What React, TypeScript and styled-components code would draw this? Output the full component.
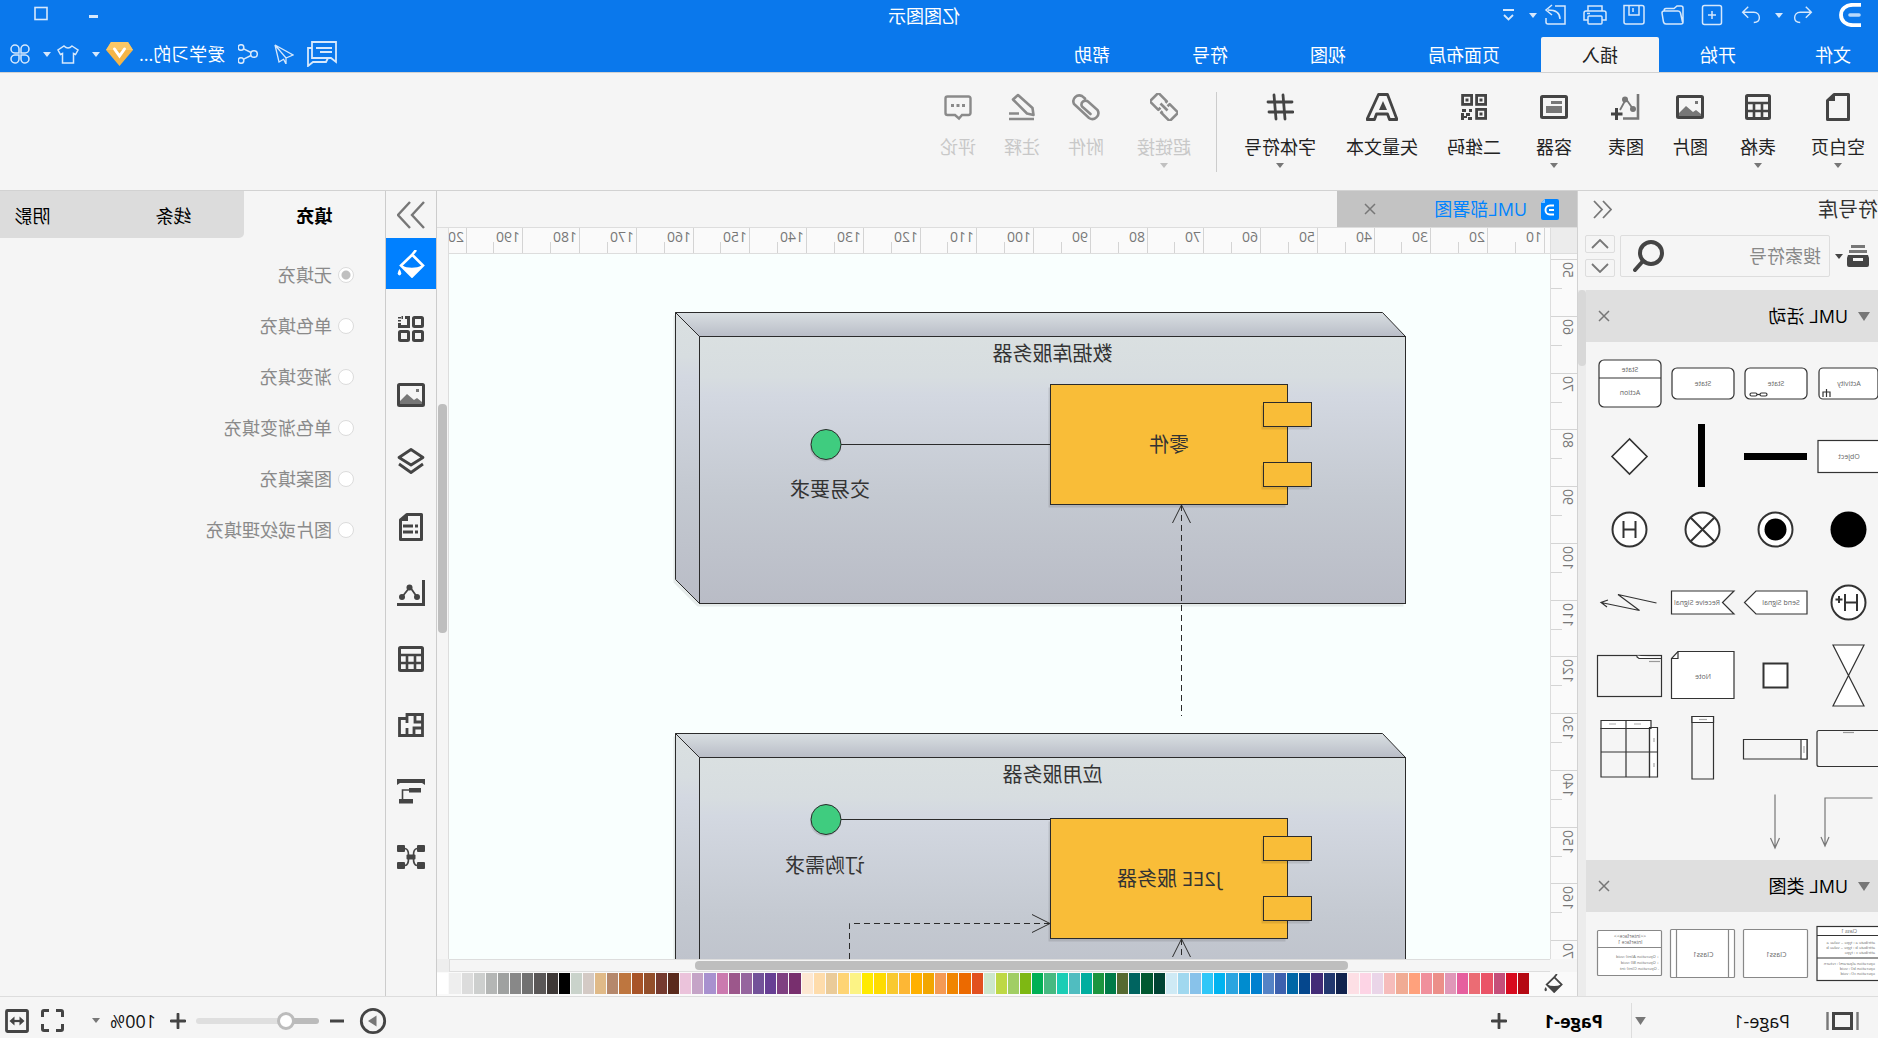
import React from "react";
import styled, { createGlobalStyle } from "styled-components";

const ink = "#444444";
const mid = "#777777";
const line = "#d2d2d2";
const blue = "#0a78ec";

const Global = createGlobalStyle`
  *, *::before, *::after { box-sizing: border-box; }
  html, body { margin: 0; padding: 0; background: #f5f5f5; }
  body, button, input, select {
    font-family: "Open Sans", "Noto Sans CJK SC", sans-serif;
    font-size: 18px;
    line-height: 24px;
  }
  button, input, select { margin: 0; padding: 0; border: 0; background: none; color: inherit; outline: none; }
  svg { display: block; flex: none; }
`;

/* The whole window is shown as a mirror image. */
const Window = styled.div`
  display: flex;
  flex-direction: column;
  height: 100vh;
  overflow: hidden;
  transform: scaleX(-1);
  background: #f5f5f5;
  color: #222;
  white-space: nowrap;
`;

/* ---------- icons ---------- */

type IconProps = { name: keyof typeof icons; w?: number; h?: number; box?: string };

const Icon = ({ name, w = 28, h = 28, box = "0 0 28 28" }: IconProps) => (
  <svg width={w} height={h} viewBox={box} fill="none" stroke="currentColor" strokeWidth={2} aria-hidden="true">
    {icons[name]}
  </svg>
);

const icons = {
  undo: <path d="M9 6 L3 12 L9 18 M3 12 H15 C19 12 21 15 21 18 C21 21 19 23 15 23" strokeWidth="1.5" transform="translate(2 -1)" />,
  redo: <path d="M19 6 L25 12 L19 18 M25 12 H13 C9 12 7 15 7 18 C7 21 9 23 13 23" strokeWidth="1.5" transform="translate(-2 -1)" />,
  add: (
    <g strokeWidth="1.5">
      <rect x="4.500" y="4.500" width="19" height="19" rx="2" />
      <path d="M14 10 V18 M10 14 H18" />
    </g>
  ),
  folder: <path d="M4 9 V7 Q4 5 6 5 H10 L13 7.5 H21 Q23 7.5 23 10 M4 9 V21 Q4 23 6 23 H21 Q23 23 23.500 21 L25 12 Q25 10 23 10 H9 Q7 10 6.500 12 L4.500 21" strokeWidth="1.5" />,
  save: (
    <g strokeWidth="1.5">
      <path d="M6 4.500 H24 V21 Q24 23 22 23 H6 Q4 23 4 21 V6.500 Q4 4.500 6 4.500 Z" />
      <path d="M9 4.500 V14 H19 V4.500 M15 7 V11" />
    </g>
  ),
  print: (
    <g strokeWidth="1.5">
      <path d="M7 10 V5 H21 V10 M7 19 H3 V12 Q3 10 5 10 H23 Q25 10 25 12 V19 H21" />
      <rect x="7" y="15" width="14" height="8" rx="1" />
      <path d="M19 12.500 H22" />
    </g>
  ),
  exportIcon: (
    <g strokeWidth="1.5">
      <path d="M15 5 H5 V23 H22 Q24 23 24 21 V17" />
      <path d="M10 18 C10 12 14 9 22 9 M18 4 L24 9 L18 14" />
    </g>
  ),
  customize: <path d="M9 9 H20 M10 14 L14.500 18.500 L19 14" strokeWidth="1.8" />,
  caret: <path d="M0 0 H8 L4 5 Z" fill="currentColor" stroke="none" />,
  triangle: <path d="M0 0 H12 L6 9 Z" fill="currentColor" stroke="none" />,
  logo: (
    <g>
      <path d="M0 1.800 H8 C15 1.800 20 6 20 12 C20 18 15 22.200 8 22.200 H0" strokeWidth="3.800" />
      <path d="M2 12 H11" stroke="#b8d8fb" strokeWidth="3.600" strokeLinecap="round" />
    </g>
  ),
  docLogo: (
    <g>
      <path d="M2 0 H14 L18 4 V19 Q18 21 16 21 H2 Q0 21 0 19 V2 Q0 0 2 0 Z" fill="#0083ff" stroke="none" />
      <path d="M14 0 L18 4 H14 Z" fill="#8cc6ff" stroke="none" />
      <path d="M5 6.500 H9 C15 6.500 15 15.500 9 15.500 H5 M5 11 H10" stroke="#fff" strokeWidth="1.900" />
    </g>
  ),
  chat: (
    <g strokeWidth="1.800">
      <path d="M1 1 H25 V17 H6 L1 21 Z" />
      <path d="M25 7 H29 V25 L24 21 H11 L9 17 M5 7 H21 M5 11 H17" />
    </g>
  ),
  send: <path d="M19 1 L1 11 L8 14 L19 1 L15 18 L10 15 M8 14 V20 L10.500 15" strokeWidth="1.300" />,
  share: (
    <g strokeWidth="1.500">
      <circle cx="4" cy="10" r="3.300" />
      <circle cx="17" cy="3.500" r="2.800" />
      <circle cx="17" cy="16.500" r="2.800" />
      <path d="M7 8.500 L14.300 4.800 M7 11.500 L14.300 15.200" />
    </g>
  ),
  diamond: (
    <g>
      <path d="M5 0 H22 L27 8 L13.500 24 L0 8 Z" fill="#f4b548" stroke="none" />
      <path d="M5 0 H22 L27 8 H0 Z" fill="#fbc866" stroke="none" />
      <path d="M8.500 7 L13.500 14 L18.500 7" stroke="#fff" strokeWidth="3" strokeLinecap="round" />
    </g>
  ),
  shirt: <path d="M7 1 L1 5 L3.500 9.500 L5.500 8.500 V18 H16.500 V8.500 L18.500 9.500 L21 5 L15 1 Q11 5 7 1 Z" strokeWidth="1.500" />,
  clover: (
    <g strokeWidth="1.500">
      <path d="M9 9 H4.800 A4 4 0 1 1 9 4.800 Z" />
      <path d="M11 9 V4.800 A4 4 0 1 1 15.200 9 Z" />
      <path d="M9 11 V15.200 A4 4 0 1 1 4.800 11 Z" />
      <path d="M11 11 H15.200 A4 4 0 1 1 11 15.200 Z" />
    </g>
  ),
  minimize: <path d="M9 15.500 H18" strokeWidth="3" />,
  maximize: <rect x="8" y="6.500" width="12" height="12" strokeWidth="1.600" />,
  page: (
    <g>
      <path d="M3.500 1.500 H18 L24.500 7.500 V26.500 H3.500 Z" strokeWidth="3" strokeLinejoin="round" />
      <path d="M17 1 V8 H25 Z" fill="currentColor" stroke="none" />
    </g>
  ),
  table: (
    <g>
      <rect x="2.500" y="2.500" width="23" height="23" rx="1" strokeWidth="3" />
      <path d="M2 10 H26 M2 18 H26 M10 10 V25 M18 10 V25" strokeWidth="2.600" />
    </g>
  ),
  image: (
    <g>
      <rect x="1.500" y="3.500" width="25" height="21" rx="1" strokeWidth="3" />
      <path d="M3 23 V21 L8 17 L11 19 L18 13 L25 20 V23 Z" fill={mid} stroke="none" />
      <rect x="6" y="8" width="3" height="3" fill={mid} stroke="none" />
    </g>
  ),
  chart: (
    <g stroke={mid}>
      <path d="M2 1 V25.500 H17" strokeWidth="2.600" />
      <path d="M7 16 L14 6 L20 17" strokeWidth="1.800" />
      <g fill={mid} stroke="none">
        <circle cx="7" cy="16" r="3" />
        <circle cx="15" cy="6.500" r="3" />
      </g>
      <path d="M23.500 15 V27 M17.500 21 H29" stroke={ink} strokeWidth="3" />
    </g>
  ),
  container: (
    <g>
      <rect x="1.500" y="3.500" width="25" height="21" rx="1" strokeWidth="3" />
      <path d="M6 8 H17 V11 H6 Z M6 13 H22 V20 H6 Z" fill={mid} stroke="none" />
    </g>
  ),
  qr: (
    <g>
      <g strokeWidth="2.800">
        <rect x="2.400" y="2.400" width="9" height="9" />
        <rect x="16.400" y="2.400" width="9" height="9" />
        <rect x="2.400" y="16.400" width="9" height="9" />
      </g>
      <path d="M5.500 5.500h3v3h-3z M19.500 5.500h3v3h-3z M5.500 19.500h3v3h-3z M16 16h3v3h-3z M22 16h4v3h-4z M18 20h4v3h-4z M16 24h4v3h-4z M24 20h3v7h-3z M21 23h3v2h-3z" fill="currentColor" stroke="none" />
    </g>
  ),
  vector: (
    <g>
      <path d="M9.500 1.500 H18.500 L30 26.500 H22.500 L20.500 21 H9.500 L7.500 26.500 H0 Z" transform="translate(-1 0)" strokeWidth="2.800" strokeLinejoin="round" />
      <path d="M13 8 L17 17 H9 Z" fill="currentColor" stroke="none" />
    </g>
  ),
  hash: <path d="M2 9 H26 M1 19 H25 M11 2 L9 26 M20 2 L18 26" strokeWidth="2.800" strokeLinecap="round" />,
  link: (
    <g transform="rotate(-45 14 14)" strokeWidth="2.600" strokeLinejoin="round">
      <path d="M12 18 V20 H0 V8 H12 V11" />
      <path d="M16 10 V8 H28 V20 H16 V17" />
      <path d="M9 14 H19" />
    </g>
  ),
  clip: (
    <path
      d="M15 5.500 L18 3 A6 6 0 0 1 26 11 L11 25 A6 6 0 0 1 2.500 17 L12 8.500 A4 4 0 0 1 18 13.500 L9.500 21"
      strokeWidth="2.600"
      strokeLinecap="round"
      transform="translate(0 0)"
    />
  ),
  note: (
    <g strokeWidth="2.600">
      <path d="M2.500 22 L3.500 15 L18 2 L23 6.500 L9 20.500 Z" strokeLinejoin="round" />
      <path d="M2 26 H27 M17 20.500 H27" />
    </g>
  ),
  comment: (
    <g>
      <path d="M3.500 3.500 H24.500 Q26.500 3.500 26.500 5.500 V20 Q26.500 22 24.500 22 H17 L13 25.500 L10 22 H3.500 Q1.500 22 1.500 20 V5.500 Q1.500 3.500 3.500 3.500 Z" strokeWidth="2.400" />
      <path d="M7 11h3v3H7z M12.500 11h3v3h-3z M18 11h3v3h-3z" fill="currentColor" stroke="none" />
    </g>
  ),
  collapseLeft: <path d="M9 1 L1 9.500 L9 18 M18 1 L10 9.500 L18 18" strokeWidth="1.800" />,
  collapseRight: <path d="M1 1 L13 14 L1 27 M15 1 L27 14 L15 27" strokeWidth="2.400" />,
  tray: (
    <g fill="currentColor" stroke="none">
      <path d="M4 0h14v3H4z M2 5h18v3H2z" fill={mid} />
      <path d="M1 10 H21 L22 13 V20 Q22 22 20 22 H2 Q0 22 0 20 V13 Z M6 13 V16 H16 V13 Z" fillRule="evenodd" />
    </g>
  ),
  search: (
    <g strokeWidth="4">
      <circle cx="13" cy="13" r="11" />
      <path d="M21 21 L29 30" strokeLinecap="round" />
    </g>
  ),
  up: <path d="M1 9 L9 1 L17 9" strokeWidth="1.800" />,
  down: <path d="M1 1 L9 9 L17 1" strokeWidth="1.800" />,
  close: <path d="M1 1 L11 11 M11 1 L1 11" strokeWidth="1.500" />,
  bucket: (
    <g>
      <path d="M13 4 L25 15.500 L14 26.500 L3 15.500 L14 4.500 M10 0 L14 5" strokeWidth="2.600" transform="translate(-1 0)" />
      <path d="M2.500 15.500 Q13 20 24 15.500 L13 27 Z" fill="currentColor" stroke="none" />
      <path d="M25.500 19 Q29 24 25.500 25.500 Q22 24 25.500 19 Z" fill="currentColor" stroke="none" />
    </g>
  ),
  apps: (
    <g strokeWidth="3">
      <rect x="2.500" y="2.500" width="9" height="9" rx="1" />
      <rect x="2.500" y="16.500" width="9" height="9" rx="1" />
      <rect x="16.500" y="16.500" width="9" height="9" rx="1" />
      <path d="M20 2.500 H16.500 V11.500 H25.500 V8 M22 2.500 H23.500 M25.500 2 V3.500 M25.500 5 V6.500" />
    </g>
  ),
  layers: (
    <g strokeWidth="2.800" strokeLinejoin="round">
      <path d="M14 2.500 L26 10.500 L14 18 L2 10.500 Z" />
      <path d="M2 17 L14 25.500 L26 17" />
    </g>
  ),
  doc: (
    <g>
      <path d="M3.500 1.500 H18 L24.500 7 V26.500 H3.500 Z" strokeWidth="3" strokeLinejoin="round" />
      <path d="M17 1 V8 H25 Z" fill="currentColor" stroke="none" />
      <path d="M7 13 H10 M12 13 H22 M7 19 H10 M12 19 H22" strokeWidth="2.800" />
    </g>
  ),
  graph: (
    <g>
      <path d="M1.500 1 V25.500 H28" strokeWidth="3" />
      <path d="M8 18 L15 8 L23 18" strokeWidth="1.800" />
      <g fill="currentColor" stroke="none">
        <circle cx="8" cy="18" r="3" />
        <circle cx="15.500" cy="8.500" r="3" />
        <circle cx="23" cy="18" r="3" />
      </g>
    </g>
  ),
  plan: <path d="M2.500 3.500 H18 V7.500 H25.500 V24.500 H2.500 Z M18 7 V12 M18 17 V24 M10 4 V11 H3 M3 17 H11 V24" strokeWidth="2.800" />,
  gantt: (
    <g fill="currentColor" stroke="none">
      <path d="M0 2 H28 V8 L25 6 H3 L0 8 Z M4 11h12v4.500H4z M12 22h14v4.500H12z" />
      <path d="M16 13 H22.500 V22" fill="none" stroke="currentColor" strokeWidth="1.600" />
    </g>
  ),
  mind: (
    <g>
      <g fill="currentColor" stroke="none">
        <rect x="0" y="2" width="8" height="7" rx="1" />
        <rect x="20" y="2" width="8" height="7" rx="1" />
        <rect x="0" y="19" width="8" height="7" rx="1" />
        <rect x="20" y="19" width="8" height="7" rx="1" />
        <rect x="9.500" y="11.500" width="9" height="5" rx="1" />
      </g>
      <path d="M8 5.500 Q11.500 6 11.500 12 V16 Q11.500 22 8 22.500 M20 5.500 Q16.500 6 16.500 12 V16 Q16.500 22 20 22.500" strokeWidth="1.700" />
    </g>
  ),
  frame: (
    <g>
      <path d="M1.500 0 V18 M31.500 0 V18" stroke={mid} strokeWidth="2.400" />
      <rect x="7.500" y="1.500" width="18" height="15" strokeWidth="3" />
    </g>
  ),
  plus: <path d="M8 1 V15 M1 8 H15" strokeWidth="2.800" strokeLinecap="round" />,
  minus: <path d="M1 8 H15" strokeWidth="3" />,
  play: (
    <g>
      <circle cx="14" cy="14" r="11.700" strokeWidth="2.800" />
      <path d="M10.500 8.500 L19 14 L10.500 19.500 Z" fill={mid} stroke="none" />
    </g>
  ),
  fullscreen: <path d="M1.500 8 V3 Q1.500 1.500 3 1.500 H8 M15 1.500 H20 Q21.500 1.500 21.500 3 V8 M21.500 15 V20 Q21.500 21.500 20 21.500 H15 M8 21.500 H3 Q1.500 21.500 1.500 20 V15" strokeWidth="3" />,
  fit: (
    <g>
      <rect x="1.500" y="1.500" width="21" height="21" rx="1" strokeWidth="2.800" />
      <path d="M6 12 H18" strokeWidth="2.200" />
      <path d="M4.500 12 L9.500 7.500 V16.500 Z M19.500 12 L14.500 7.500 V16.500 Z" fill="currentColor" stroke="none" />
    </g>
  ),
};

const Caret = () => <Icon name="caret" w={8} h={5} box="0 0 8 5" />;

/* ---------- header ---------- */

const Header = styled.header`
  flex: none;
  display: flex;
  flex-direction: column;
  justify-content: space-between;
  height: 73px;
  border-bottom: 1px solid ${line};
  background: ${blue};
  color: #fff;
`;

const TitleBar = styled.div`
  display: grid;
  grid-template-columns: 1fr auto 1fr;
  align-items: center;
  height: 30px;
`;

const QuickBar = styled.div`
  display: flex;
  align-items: center;
  padding-left: 17px;
  gap: 20px;
  color: #d6e8fc;
`;

const QuickGroup = styled.div`
  display: flex;
  align-items: center;
`;

const LogoMark = styled.span`
  color: #fff;
`;

const QuickButton = styled.button<{ $w?: number }>`
  display: flex;
  align-items: center;
  justify-content: center;
  width: ${(p) => p.$w ?? 39}px;
  height: 28px;
`;

const Title = styled.div`
  padding: 2px 0 0 30px;
`;

const WindowButtons = styled.div`
  display: flex;
  justify-content: flex-end;
  padding-right: 15px;
  color: #d6e8fc;
`;

const MenuBar = styled.div`
  display: flex;
  align-items: flex-end;
  justify-content: space-between;
  padding-right: 10px;
`;

const MenuTabs = styled.nav`
  display: flex;
`;

const MenuTab = styled.button<{ $active?: boolean }>`
  height: 35px;
  padding: 0 41px;
  border-radius: 2px 2px 0 0;
  background: ${(p) => (p.$active ? "#f5f5f5" : "transparent")};
  color: ${(p) => (p.$active ? "#222" : "#fff")};
  &:first-child {
    padding-left: 27px;
    padding-right: 38px;
  }
`;

const Account = styled.div`
  display: flex;
  align-items: center;
  gap: 13px;
  height: 36px;
  color: #d6e8fc;
`;

const AccountButton = styled.button`
  display: flex;
  align-items: center;
  gap: 6px;
`;

const ShareButton = styled(AccountButton)`
  padding-left: 3px;
`;

const UserName = styled.span`
  color: #fff;
`;

/* ---------- ribbon ---------- */

const Ribbon = styled.div`
  flex: none;
  display: flex;
  height: 118px;
  border-bottom: 1px solid ${line};
`;

const Tool = styled.button<{ $w: number }>`
  display: flex;
  flex-direction: column;
  align-items: center;
  width: ${(p) => p.$w}px;
  padding-top: 20px;
  color: ${ink};
  &:disabled {
    color: #8a8a8a;
  }
`;

const ToolLabel = styled.span`
  margin: 14px 0 4px;
  color: #222;
  ${Tool}:disabled & {
    color: #c8c8c8;
  }
`;

const ToolCaret = styled.span`
  color: #777;
  ${Tool}:disabled & {
    color: #c0c0c0;
  }
`;

const RibbonRule = styled.span`
  width: 1px;
  height: 80px;
  margin: 19px 2px 0 9px;
  background: #cccccc;
`;

type ToolSpec = { label: string; icon: keyof typeof icons; w: number; menu?: boolean };

const tools: ToolSpec[] = [
  { label: "空白页", icon: "page", w: 80, menu: true },
  { label: "表格", icon: "table", w: 80, menu: true },
  { label: "图片", icon: "image", w: 56 },
  { label: "图表", icon: "chart", w: 72 },
  { label: "容器", icon: "container", w: 72, menu: true },
  { label: "二维码", icon: "qr", w: 88 },
  { label: "矢量文本", icon: "vector", w: 96 },
  { label: "字体符号", icon: "hash", w: 108, menu: true },
];

const disabledTools: ToolSpec[] = [
  { label: "超链接", icon: "link", w: 100, menu: true },
  { label: "附件", icon: "clip", w: 56 },
  { label: "注释", icon: "note", w: 72 },
  { label: "评论", icon: "comment", w: 56 },
];

const RibbonTool = ({ spec, disabled }: { spec: ToolSpec; disabled?: boolean }) => (
  <Tool $w={spec.w} disabled={disabled}>
    {spec.icon === "chart" || spec.icon === "vector" ? (
      <Icon name={spec.icon} w={32} box="-2 0 32 28" />
    ) : (
      <Icon name={spec.icon} />
    )}
    <ToolLabel>{spec.label}</ToolLabel>
    {spec.menu && (
      <ToolCaret>
        <Caret />
      </ToolCaret>
    )}
  </Tool>
);

/* ---------- work area ---------- */

const Work = styled.div`
  flex: 1;
  display: flex;
  min-height: 0;
`;

const Library = styled.aside`
  flex: none;
  display: flex;
  flex-direction: column;
  width: 301px;
  border-right: 1px solid ${line};
`;

const LibraryHead = styled.div`
  display: flex;
  align-items: center;
  justify-content: space-between;
  height: 37px;
  padding-right: 15px;
  color: ${mid};
`;

const LibraryTitle = styled.h2`
  margin: 0;
  font-size: 20px;
  font-weight: 400;
  color: #333;
`;

const PlainButton = styled.button`
  display: flex;
  align-items: center;
  justify-content: center;
`;

const SearchRow = styled.div`
  display: flex;
  align-items: center;
  height: 42px;
  margin: 7px 0 13px;
  padding: 0 7px 0 9px;
  gap: 5px;
  color: ${ink};
`;

const LibraryPick = styled.button`
  display: flex;
  align-items: center;
  gap: 4px;
`;

const SearchBox = styled.label`
  flex: 1;
  display: flex;
  align-items: center;
  min-width: 0;
  height: 42px;
  padding: 0 12px 0 8px;
  border: 1px solid #dddddd;
  border-radius: 2px;
`;

const SearchInput = styled.input`
  flex: 1;
  min-width: 0;
  &::placeholder {
    color: #888;
    opacity: 1;
  }
`;

const Steps = styled.div`
  display: flex;
  flex-direction: column;
  gap: 6px;
  color: ${mid};
`;

const Step = styled.button`
  display: flex;
  align-items: center;
  justify-content: center;
  width: 30px;
  height: 18px;
  border: 1px solid #dddddd;
  border-radius: 2px;
`;

const LibraryBody = styled.div`
  flex: 1;
  display: flex;
  min-height: 0;
  overflow: hidden;
`;

const LibraryList = styled.div`
  flex: 1;
  min-width: 0;
`;

const LibraryTrack = styled.div`
  width: 8px;
  background: #ececec;
`;

const LibraryThumb = styled.div`
  height: 76px;
  border-radius: 4px;
  background: #d8d8d8;
`;

const SectionHead = styled.div`
  display: flex;
  align-items: center;
  height: 52px;
  padding: 0 12px 0 8px;
  gap: 10px;
  background: #dfdfdf;
  color: ${mid};
`;

const SectionTitle = styled.h3`
  flex: 1;
  margin: 0;
  font-size: 18px;
  font-weight: 400;
  color: #000;
`;

const Shapes = styled.div`
  display: grid;
  grid-template-columns: repeat(4, 73px);
  margin-left: -7px;
  padding: 5px 0 2px;
`;

const Tiny = ({ x, y, children, anchor = "middle", size = 7 }: { x: number; y: number; children: string; anchor?: "start" | "middle"; size?: number }) => (
  <text x={x} y={y} textAnchor={anchor} fontSize={size} fill="#666" stroke="none">
    {children}
  </text>
);

const activityShapes: React.ReactNode[] = [
  <g key="activity">
    <rect x="7" y="21" width="59" height="31" rx="4" fill="#fff" />
    <Tiny x={36} y={39}>Activity</Tiny>
    <path d="M55 50 V45 H62 V50 M58.500 50 V42" />
  </g>,
  <g key="state-link">
    <rect x="5" y="21" width="62" height="31" rx="5" fill="#fff" />
    <Tiny x={36} y={39}>State</Tiny>
    <rect x="45" y="46" width="7" height="3" rx="1.500" />
    <rect x="55" y="46" width="7" height="3" rx="1.500" />
    <path d="M52 47.500 H55" />
  </g>,
  <g key="state">
    <rect x="5" y="21" width="62" height="31" rx="5" fill="#fff" />
    <Tiny x={36} y={39}>State</Tiny>
  </g>,
  <g key="state-action">
    <rect x="5" y="13" width="62" height="47" rx="5" fill="#fff" />
    <path d="M5 31 H67" />
    <Tiny x={36} y={25}>State</Tiny>
    <Tiny x={36} y={48}>Action</Tiny>
  </g>,
  <g key="object">
    <rect x="5" y="20.500" width="62" height="32" fill="#fff" />
    <Tiny x={36} y={39}>Object</Tiny>
  </g>,
  <rect key="hbar" x="5" y="33" width="63" height="7" fill="#000" stroke="none" />,
  <rect key="vbar" x="34" y="4" width="7" height="63" fill="#000" stroke="none" />,
  <path key="decision" d="M36.500 19 L54 36.500 L36.500 54 L19 36.500 Z" fill="#fff" strokeWidth="1.600" />,
  <circle key="start" cx="36.500" cy="36.500" r="18" fill="#000" stroke="none" />,
  <g key="end">
    <circle cx="36.500" cy="36.500" r="17" fill="#fff" strokeWidth="2" />
    <circle cx="36.500" cy="36.500" r="11" fill="#000" stroke="none" />
  </g>,
  <g key="flow-end" strokeWidth="2">
    <circle cx="36.500" cy="36.500" r="17" fill="#fff" />
    <path d="M24.500 24.500 L48.500 48.500 M48.500 24.500 L24.500 48.500" />
  </g>,
  <g key="history" strokeWidth="2">
    <circle cx="36.500" cy="36.500" r="17" fill="#fff" />
    <path d="M30.500 28 V45 M42.500 28 V45 M30.500 36.500 H42.500" />
  </g>,
  <g key="deep-history" strokeWidth="2">
    <circle cx="36.500" cy="36.500" r="17" fill="#fff" />
    <path d="M28 28 V45 M40 28 V45 M28 36.500 H40 M46 30 V37 M42.500 33.500 H49.500" />
  </g>,
  <g key="send">
    <path d="M5 25 H56 L67.500 36.500 L56 48 H5 Z" fill="#fff" />
    <Tiny x={31} y={39}>Send Signal</Tiny>
  </g>,
  <g key="receive">
    <path d="M5 25 H67.500 V48 H5 L16.500 36.500 Z" fill="#fff" />
    <Tiny x={42} y={39}>Receive Signal</Tiny>
  </g>,
  <path key="interrupt" d="M9.500 37 L48 28.500 L26.500 44.500 L65 36.500 M58 34 L65 36.500 L59 41" />,
  <path key="hourglass" d="M21 6 H52 L21 67 H52 Z" fill="#fff" />,
  <rect key="pin" x="24.500" y="24.500" width="24" height="24" fill="#fff" strokeWidth="2" />,
  <g key="note">
    <path d="M5 12.500 H61 L67.500 19.500 V59.500 H5 Z" fill="#fff" />
    <path d="M61 12.500 V19.500 H67.500" />
    <Tiny x={36} y={40}>Note</Tiny>
  </g>,
  <g key="frame">
    <rect x="4.500" y="16.500" width="64" height="41" />
    <path d="M4.500 19.500 H27 L29 18 V16.500" fill="#fff" />
    <path d="M6 22.500 H17" stroke="#999" />
  </g>,
  <g key="group">
    <rect x="5" y="18.500" width="63" height="36" rx="2" />
    <path d="M31 20.500 H42" stroke="#999" />
  </g>,
  <g key="lane-h">
    <path d="M5 27.500 H68.500 V47 H5 Z" />
    <path d="M5 27.500 H11 V47 H5 Z" fill="#fff" />
    <path d="M8 34 V41" stroke="#aaa" />
  </g>,
  <g key="lane-v">
    <path d="M25.500 4.500 H47 V67 H25.500 Z" />
    <path d="M25.500 4.500 H47 V10.500 H25.500 Z" fill="#fff" />
    <path d="M32 7.500 H40" stroke="#aaa" />
  </g>,
  <g key="lane-grid">
    <path d="M15 8.500 H65 V16.500 H15 Z M8.500 15.500 H16.500 V65 H8.500 Z" fill="#fff" />
    <path d="M16.500 16.500 H65 V65 H16.500 Z M40 8.500 V65 M8.500 40 H65" />
    <path d="M25 12 H32 M50 12 H57 M12 26 V30 M12 51 V55" stroke="#aaa" />
  </g>,
  <path key="elbow" d="M12.500 13 H60 V61 M56 52 L60 61 L64 52" stroke="#777" />,
  <path key="arrow" d="M37 9.500 V63 M32.500 53 L37 63 L41.500 53" stroke="#777" />,
];

const classShapes: React.ReactNode[] = [
  <g key="class-full">
    <rect x="5" y="9.500" width="63" height="54" fill="#fff" />
    <path d="M5 18.500 H68 M5 41 H68" />
    <Tiny x={36} y={16} size={5}>Class 1</Tiny>
    <Tiny x={10} y={27} size={4}  anchor="start">attribute a : type = value a</Tiny>
    <Tiny x={10} y={32} size={4} anchor="start">attribute b : type = value b</Tiny>
    <Tiny x={10} y={37} size={4} anchor="start">attribute c : type</Tiny>
    <Tiny x={10} y={48} size={4} anchor="start">operation a(param) : return</Tiny>
    <Tiny x={10} y={53} size={4} anchor="start">operation b() : void</Tiny>
    <Tiny x={10} y={58} size={4} anchor="start">operation c() : void</Tiny>
  </g>,
  <g key="class" stroke="#888">
    <rect x="4.500" y="12.500" width="64" height="48" rx="1" fill="#fff" />
    <Tiny x={36} y={40}>Class1</Tiny>
  </g>,
  <g key="active-class" stroke="#888">
    <rect x="4.500" y="12.500" width="64" height="48" rx="1" fill="#fff" />
    <path d="M10.500 12.500 V60.500 M62.500 12.500 V60.500" />
    <Tiny x={36} y={40}>Class1</Tiny>
  </g>,
  <g key="interface" stroke="#888">
    <rect x="4.500" y="13.500" width="64" height="45" rx="1" fill="#fff" />
    <path d="M4.500 30.500 H68.500" />
    <Tiny x={36} y={21} size={5}>{"<<interface>>"}</Tiny>
    <Tiny x={36} y={27} size={5}>Interface 1</Tiny>
    <Tiny x={7} y={41} size={4} anchor="start">+  Operation A(int) :void</Tiny>
    <Tiny x={7} y={47} size={4} anchor="start">+  Operation B() :void</Tiny>
    <Tiny x={7} y={53} size={4} anchor="start">-  Operation C(int) :int</Tiny>
  </g>,
];

const Section = ({ title, shapes }: { title: string; shapes: React.ReactNode[] }) => (
  <section>
    <SectionHead>
      <Icon name="triangle" w={12} h={9} box="0 0 12 9" />
      <SectionTitle>{title}</SectionTitle>
      <PlainButton aria-label="关闭">
        <Icon name="close" w={12} h={12} box="0 0 12 12" />
      </PlainButton>
    </SectionHead>
    <Shapes>
      {shapes.map((shape, i) => (
        <svg key={i} width="73" height="73" fill="none" stroke="#333" strokeWidth="1.200">
          {shape}
        </svg>
      ))}
    </Shapes>
  </section>
);

/* ---------- editor ---------- */

const Editor = styled.main`
  flex: 1;
  display: flex;
  flex-direction: column;
  min-width: 0;
  border-right: 1px solid #cccccc;
`;

const TabStrip = styled.div`
  flex: none;
  display: flex;
  height: 37px;
  border-bottom: 1px solid #dddddd;
`;

const DocTab = styled.div`
  display: flex;
  align-items: center;
  width: 240px;
  padding: 0 27px 0 18px;
  gap: 14px;
  background: #c3c3c3;
  color: ${mid};
`;

const DocName = styled.span`
  flex: 1;
  color: #0083ff;
`;

const Board = styled.div`
  flex: 1;
  display: grid;
  grid-template-columns: 27px 1fr 12px;
  grid-template-rows: 26px 1fr 13px;
  min-height: 0;
`;

const RulerCorner = styled.div`
  border: solid #dddddd;
  border-width: 0 1px 1px 0;
  background: #ececec;
`;

const RulerX = styled.div`
  display: flex;
  min-width: 0;
  overflow: hidden;
  padding-left: 5px;
  border-bottom: 1px solid #dddddd;
  background: #fafafa;
`;

const RulerY = styled.div`
  display: flex;
  flex-direction: column;
  min-height: 0;
  overflow: hidden;
  padding-top: 5px;
  border-right: 1px solid #dddddd;
  background: #fafafa;
`;

const MarkX = styled.span`
  position: relative;
  flex: none;
  padding-left: 2px;
  border-left: 1px solid #d4d4d4;
  font-size: 14px;
  line-height: 18px;
  color: #777;
  &::after {
    content: "";
    position: absolute;
    left: 28px;
    bottom: 0;
    height: 11px;
    border-left: 1px solid #d4d4d4;
  }
`;

const MarkY = styled.span`
  position: relative;
  flex: none;
  border-top: 1px solid #d4d4d4;
  &::after {
    content: "";
    position: absolute;
    right: 0;
    top: 28px;
    width: 11px;
    border-top: 1px solid #d4d4d4;
  }
`;

const MarkYLabel = styled.span`
  display: block;
  width: 18px;
  padding-bottom: 2px;
  writing-mode: vertical-rl;
  transform: rotate(180deg);
  font-size: 14px;
  line-height: 18px;
  color: #777;
`;

const Sheet = styled.div`
  min-width: 0;
  min-height: 0;
  overflow: hidden;
  background: #f9fffe;
`;

const ScrollY = styled.div`
  grid-column: 3;
  grid-row: 1 / 3;
  padding: 176px 1px 0 1px;
  border-left: 1px solid #dddddd;
`;

const ScrollX = styled.div`
  grid-column: 2;
  padding: 1px 0 1px 202px;
  border: solid #dddddd;
  border-width: 1px 1px 1px 0;
`;

const ScrollCorner = styled.div`
  background: #eeeeee;
`;

const Thumb = styled.div<{ $w: string; $h: string }>`
  width: ${(p) => p.$w};
  height: ${(p) => p.$h};
  border-radius: 4px;
  background: #bebebe;
`;

const PaletteRow = styled.div`
  flex: none;
  display: flex;
  align-items: center;
  height: 24px;
  padding: 0 0 2px 14px;
  gap: 15px;
  background: #fafafa;
  color: ${ink};
`;

const Palette = styled.div`
  flex: 1;
  display: flex;
  gap: 1px;
`;

const Swatch = styled.button<{ $c: string }>`
  flex: 1;
  height: 21px;
  background: ${(p) => p.$c};
`;

const swatches = (
  "b50913 d80a1e c54f7a ea5367 eb6c74 e65f9e e097b8 ec8f89 f0909c ffa17c f0ab94 f6bcbb ead5e8 fdd4e5 fddfe5 " +
  "12234e 22386f 432c77 05478d 0067a6 3d61ae 5583c5 0080cf 008ccf 2ba5e0 00b3f0 30c7f8 88c2ea a0d8ef cfeaf5 " +
  "004334 005830 006460 566a31 007b48 1c953f 00ae9f 50bdc0 1bcdb5 47b981 00b055 7eb813 a1ce64 bed845 cde7cb " +
  "e2501f ec6a00 f08500 f49a54 f2a600 ffb000 fdb735 f9c92f fedb00 ffea00 fcf385 fed474 eacb99 fedcab fde8d2 " +
  "782f6e 7f4081 673f94 735299 96659e 9c578b cb7aaf a891cf c5a4c7 ebc3db 5a2a1c 753a2f 934f2b a85428 be763f " +
  "b5886c e0ba88 d4cac5 cad3cb 000000 3e3836 5a5757 717171 888888 9fa1a0 b4b6b5 cdcfce dcdcdc eeeeee ffffff"
).split(" ");

/* Pixels taken by ten millimetres on the rulers. */
const TEN_MM = 56.75;
const markSize = (i: number) => Math.round((i + 1) * TEN_MM) - Math.round(i * TEN_MM);
const xMarks = Array.from({ length: 20 }, (_, i) => (i + 1) * 10);
const yMarks = Array.from({ length: 13 }, (_, i) => (i + 5) * 10);

const ServerNode = ({ y, title }: { y: number; title: string }) => (
  <g transform={`translate(144.500 ${y})`} stroke="#2b2b2b">
    <path d="M2 27 L25 3 H732 V270 L708 294 H2 Z" fill="#000" fillOpacity="0.08" stroke="none" />
    <path d="M0 24 L23 0 H730 L706 24 Z" fill="url(#edge)" />
    <path d="M706 24 L730 0 V267 L706 291 Z" fill="url(#face)" />
    <rect x="0" y="24" width="706" height="267" fill="url(#face)" />
    <text x="353" y="48" textAnchor="middle" fontSize="20" fill="#333" stroke="none">{title}</text>
  </g>
);

const Block = ({ x, y, w, h }: { x: number; y: number; w: number; h: number }) => (
  <g>
    <rect x={x + 2} y={y + 3} width={w} height={h} fill="#000" fillOpacity="0.1" />
    <rect x={x} y={y} width={w} height={h} fill="#f9bd38" stroke="#2b2b2b" />
  </g>
);

const Part = ({ y, label }: { y: number; label: string }) => (
  <g>
    <Block x={262.5} y={y} w={237} h={120} />
    <Block x={238.5} y={y + 18} w={48} h={24} />
    <Block x={238.5} y={y + 78} w={48} h={24} />
    <text x="381" y={y + 67} textAnchor="middle" fontSize="20" fill="#333">{label}</text>
  </g>
);

const Port = ({ x, y, textX, textY, label }: { x: number; y: number; textX: number; textY: number; label: string }) => (
  <g>
    <path d={`M500 ${y} H${x}`} stroke="#2b2b2b" />
    <circle cx={x + 1} cy={y + 2} r="15" fill="#000" fillOpacity="0.12" />
    <circle cx={x} cy={y} r="15" fill="#3fcc7f" stroke="#2b2b2b" />
    <text x={textX} y={textY} textAnchor="middle" fontSize="20" fill="#333">{label}</text>
  </g>
);

const Diagram = () => (
  <svg width="100%" height="100%" fill="none" role="img" aria-label="UML部署图">
    <defs>
      <linearGradient id="face" x1="0" y1="0" x2="0" y2="1">
        <stop offset="0" stopColor="#dae0e1" />
        <stop offset="0.150" stopColor="#d7dde0" />
        <stop offset="0.220" stopColor="#d3d8e1" />
        <stop offset="0.600" stopColor="#c4c9d1" />
        <stop offset="1" stopColor="#b9bcc6" />
      </linearGradient>
      <linearGradient id="edge" x1="0" y1="0" x2="0" y2="1">
        <stop offset="0" stopColor="#d9dfe2" />
        <stop offset="1" stopColor="#b9bdc7" />
      </linearGradient>
    </defs>
    <ServerNode y={58.5} title="数据库服务器" />
    <ServerNode y={479.5} title="应用服务器" />
    <Port x={724} y={190.5} textX={720} textY={243} label="交易要求" />
    <Part y={130.5} label="零件" />
    <Port x={724} y={565.5} textX={725} textY={619} label="订购需求" />
    <Part y={564.5} label="J2EE 服务器" />
    <g stroke="#2b2b2b">
      <path d="M368.500 251 V462" strokeDasharray="6 4" />
      <path d="M359.500 269 L368.500 251 L377.500 269" />
      <path d="M368.500 685 V704" strokeDasharray="6 4" />
      <path d="M359.500 703 L368.500 685 L377.500 703" />
      <path d="M500 669.500 H700.500 V720" strokeDasharray="6 4" />
      <path d="M518 660.500 L500 669.500 L518 678.500" />
    </g>
  </svg>
);

/* ---------- side rail and properties ---------- */

const Rail = styled.nav`
  flex: none;
  display: flex;
  flex-direction: column;
  width: 51px;
  border-right: 1px solid #cccccc;
  color: ${ink};
`;

const RailToggle = styled.button`
  display: flex;
  align-items: center;
  justify-content: center;
  height: 47px;
  color: ${mid};
`;

const RailButton = styled.button<{ $active?: boolean }>`
  display: flex;
  align-items: center;
  justify-content: center;
  height: ${(p) => (p.$active ? 51 : 66)}px;
  margin-bottom: ${(p) => (p.$active ? 7 : 0)}px;
  background: ${(p) => (p.$active ? "#0080ff" : "transparent")};
  color: ${(p) => (p.$active ? "#fff" : ink)};
`;

const Properties = styled.aside`
  flex: none;
  width: 385px;
`;

const PropTabs = styled.div`
  display: flex;
  height: 47px;
  overflow: hidden;
`;

const PropTab = styled.button<{ $active?: boolean }>`
  flex: none;
  width: 141px;
  padding-top: 2px;
  background: ${(p) => (p.$active ? "transparent" : "#dcdcdc")};
  color: #000;
  font-weight: ${(p) => (p.$active ? 700 : 400)};
  &:nth-child(2) {
    border-bottom-left-radius: 5px;
  }
`;

const FillOptions = styled.fieldset`
  margin: 0;
  padding: 11px 0 0 31px;
  border: 0;
`;

const FillOption = styled.label`
  display: flex;
  align-items: center;
  gap: 6px;
  height: 51px;
  color: #8a8a8a;
`;

const Radio = styled.input`
  appearance: none;
  flex: none;
  width: 16px;
  height: 16px;
  margin: 0;
  border: 1px solid #dcdcdc;
  border-radius: 50%;
  background: #fff;
  &:checked {
    background: radial-gradient(circle, #c0c0c0 0 4px, #fff 5px);
  }
`;

/* ---------- status bar ---------- */

const StatusBar = styled.footer`
  flex: none;
  display: flex;
  justify-content: space-between;
  height: 42px;
  padding: 0 5px 0 19px;
  border-top: 1px solid #dddddd;
  color: ${ink};
`;

const Pages = styled.div`
  display: flex;
  align-items: center;
  padding-top: 6px;
`;

const PickBox = styled.div<{ $w: number }>`
  display: flex;
  align-items: center;
  justify-content: space-between;
  width: ${(p) => p.$w}px;
  color: ${mid};
`;

const Pick = styled.select`
  appearance: none;
  color: #111;
`;

const PagePickArea = styled.div`
  padding: 0 3px 0 36px;
`;

const PagesRule = styled.span`
  align-self: stretch;
  width: 1px;
  background: #dddddd;
`;

const PageTab = styled.button`
  margin: 0 37px 0 28px;
  color: #000;
  font-weight: 700;
`;

const Zoom = styled.div`
  display: flex;
  align-items: center;
  gap: 14px;
  padding-top: 6px;
`;

const ZoomGroup = styled.div`
  display: flex;
  align-items: center;
  gap: 10px;
`;

const ScreenGroup = styled(ZoomGroup)`
  gap: 12px;
  padding-left: 14px;
`;

const Slider = styled.input`
  appearance: none;
  width: 123px;
  height: 18px;
  &::-webkit-slider-runnable-track {
    height: 6px;
    border-radius: 3px;
    background: linear-gradient(to right, #bbbbbb 33px, #dfdfdf 33px);
  }
  &::-webkit-slider-thumb {
    appearance: none;
    width: 18px;
    height: 18px;
    margin-top: -6px;
    border: 3px solid #bcbcbc;
    border-radius: 50%;
    background: #fff;
  }
`;

const railIcons: (keyof typeof icons)[] = ["apps", "image", "layers", "doc", "graph", "table", "plan", "gantt", "mind"];
const fills = ["无填充", "单色填充", "渐变填充", "单色渐变填充", "图案填充", "图片或纹理填充"];

export default function App() {
  return (
    <>
      <Global />
      <Window>
        <Header>
          <TitleBar>
            <QuickBar>
              <LogoMark>
                <Icon name="logo" w={22} h={24} box="0 0 22 24" />
              </LogoMark>
              <QuickGroup>
                <QuickButton $w={32} aria-label="撤销"><Icon name="undo" w={26} h={26} /></QuickButton>
                <QuickButton $w={16} aria-label="撤销历史"><Caret /></QuickButton>
                <QuickButton aria-label="重做"><Icon name="redo" w={26} h={26} /></QuickButton>
                <QuickButton aria-label="新建"><Icon name="add" /></QuickButton>
                <QuickButton aria-label="打开"><Icon name="folder" /></QuickButton>
                <QuickButton aria-label="保存"><Icon name="save" /></QuickButton>
                <QuickButton aria-label="打印"><Icon name="print" /></QuickButton>
                <QuickButton aria-label="导出"><Icon name="exportIcon" /></QuickButton>
                <QuickButton $w={8} aria-label="导出选项"><Caret /></QuickButton>
                <QuickButton aria-label="自定义"><Icon name="customize" /></QuickButton>
              </QuickGroup>
            </QuickBar>
            <Title>亿图图示</Title>
            <WindowButtons>
              <QuickButton $w={52} aria-label="最小化"><Icon name="minimize" /></QuickButton>
              <QuickButton $w={52} aria-label="最大化"><Icon name="maximize" /></QuickButton>
            </WindowButtons>
          </TitleBar>
          <MenuBar>
            <MenuTabs>
              {["文件", "开始", "插入", "页面布局", "视图", "符号", "帮助"].map((t) => (
                <MenuTab key={t} $active={t === "插入"}>{t}</MenuTab>
              ))}
            </MenuTabs>
            <Account>
              <AccountButton aria-label="消息"><Icon name="chat" w={30} h={26} box="0 0 30 26" /></AccountButton>
              <AccountButton aria-label="发送"><Icon name="send" w={20} h={20} box="0 0 20 20" /></AccountButton>
              <ShareButton aria-label="分享"><Icon name="share" w={20} h={20} box="0 0 20 20" /></ShareButton>
              <AccountButton>
                <UserName>爱学习的...</UserName>
                <Icon name="diamond" w={27} h={24} box="0 0 27 24" />
                <Caret />
              </AccountButton>
              <AccountButton aria-label="皮肤">
                <Icon name="shirt" w={22} h={19} box="0 0 22 19" />
                <Caret />
              </AccountButton>
              <AccountButton aria-label="应用"><Icon name="clover" w={20} h={20} box="0 0 20 20" /></AccountButton>
            </Account>
          </MenuBar>
        </Header>

        <Ribbon>
          {tools.map((t) => <RibbonTool key={t.label} spec={t} />)}
          <RibbonRule />
          {disabledTools.map((t) => <RibbonTool key={t.label} spec={t} disabled />)}
        </Ribbon>

        <Work>
          <Library>
            <LibraryHead>
              <LibraryTitle>符号库</LibraryTitle>
              <PlainButton aria-label="收起符号库"><Icon name="collapseLeft" w={19} h={19} box="0 0 19 19" /></PlainButton>
            </LibraryHead>
            <SearchRow>
              <LibraryPick aria-label="符号库列表">
                <Icon name="tray" w={22} h={22} box="0 0 22 22" />
                <Caret />
              </LibraryPick>
              <SearchBox>
                <SearchInput placeholder="搜索符号" aria-label="搜索符号" />
                <Icon name="search" w={31} h={32} box="0 0 31 32" />
              </SearchBox>
              <Steps>
                <Step aria-label="上一个"><Icon name="up" w={18} h={10} box="0 0 18 10" /></Step>
                <Step aria-label="下一个"><Icon name="down" w={18} h={10} box="0 0 18 10" /></Step>
              </Steps>
            </SearchRow>
            <LibraryBody>
              <LibraryList>
                <Section title="UML 活动" shapes={activityShapes} />
                <Section title="UML 类图" shapes={classShapes} />
              </LibraryList>
              <LibraryTrack>
                <LibraryThumb />
              </LibraryTrack>
            </LibraryBody>
          </Library>

          <Editor>
            <TabStrip>
              <DocTab>
                <Icon name="docLogo" w={18} h={21} box="0 0 18 21" />
                <DocName>UML部署图</DocName>
                <PlainButton aria-label="关闭"><Icon name="close" w={12} h={12} box="0 0 12 12" /></PlainButton>
              </DocTab>
            </TabStrip>
            <Board>
              <RulerCorner />
              <RulerX>
                {xMarks.map((m, i) => (
                  <MarkX key={m} style={{ width: markSize(i) }}>{m}</MarkX>
                ))}
              </RulerX>
              <ScrollY>
                <Thumb $w="100%" $h="229px" />
              </ScrollY>
              <RulerY>
                {yMarks.map((m, i) => (
                  <MarkY key={m} style={{ height: markSize(i) }}>
                    <MarkYLabel>{m}</MarkYLabel>
                  </MarkY>
                ))}
              </RulerY>
              <Sheet>
                <Diagram />
              </Sheet>
              <ScrollX>
                <Thumb $w="653px" $h="100%" />
              </ScrollX>
              <ScrollCorner />
            </Board>
            <PaletteRow>
              <Icon name="bucket" w={19} h={19} />
              <Palette>
                {swatches.map((c) => <Swatch key={c} $c={`#${c}`} aria-label={`#${c}`} />)}
              </Palette>
            </PaletteRow>
          </Editor>

          <Rail>
            <RailToggle aria-label="收起面板"><Icon name="collapseRight" /></RailToggle>
            <RailButton $active aria-label="bucket"><Icon name="bucket" /></RailButton>
            {railIcons.map((name) => (
              <RailButton key={name} aria-label={name}><Icon name={name} /></RailButton>
            ))}
          </Rail>

          <Properties>
            <PropTabs>
              <PropTab $active>填充</PropTab>
              <PropTab>线条</PropTab>
              <PropTab>阴影</PropTab>
            </PropTabs>
            <FillOptions>
              {fills.map((f, i) => (
                <FillOption key={f}>
                  <Radio type="radio" name="fill" defaultChecked={i === 0} />
                  {f}
                </FillOption>
              ))}
            </FillOptions>
          </Properties>
        </Work>

        <StatusBar>
          <Pages>
            <Icon name="frame" w={33} h={18} box="0 0 33 18" />
            <PagePickArea>
              <PickBox $w={155}>
                <Pick aria-label="页面"><option>Page-1</option></Pick>
                <Icon name="triangle" w={11} h={8} box="0 0 12 9" />
              </PickBox>
            </PagePickArea>
            <PagesRule />
            <PageTab>Page-1</PageTab>
            <PlainButton aria-label="新建页面"><Icon name="plus" w={16} h={16} box="0 0 16 16" /></PlainButton>
          </Pages>
          <Zoom>
            <PlainButton aria-label="播放"><Icon name="play" /></PlainButton>
            <ZoomGroup>
              <PlainButton aria-label="缩小"><Icon name="minus" w={16} h={16} box="0 0 16 16" /></PlainButton>
              <Slider type="range" min={0} max={100} defaultValue={23} aria-label="缩放" />
              <PlainButton aria-label="放大"><Icon name="plus" w={16} h={16} box="0 0 16 16" /></PlainButton>
            </ZoomGroup>
            <PickBox $w={64}>
              <Pick aria-label="缩放比例"><option>100%</option></Pick>
              <Caret />
            </PickBox>
            <ScreenGroup>
              <PlainButton aria-label="全屏"><Icon name="fullscreen" w={23} h={23} box="0 0 23 23" /></PlainButton>
              <PlainButton aria-label="适合宽度"><Icon name="fit" w={24} h={24} box="0 0 24 24" /></PlainButton>
            </ScreenGroup>
          </Zoom>
        </StatusBar>
      </Window>
    </>
  );
}
